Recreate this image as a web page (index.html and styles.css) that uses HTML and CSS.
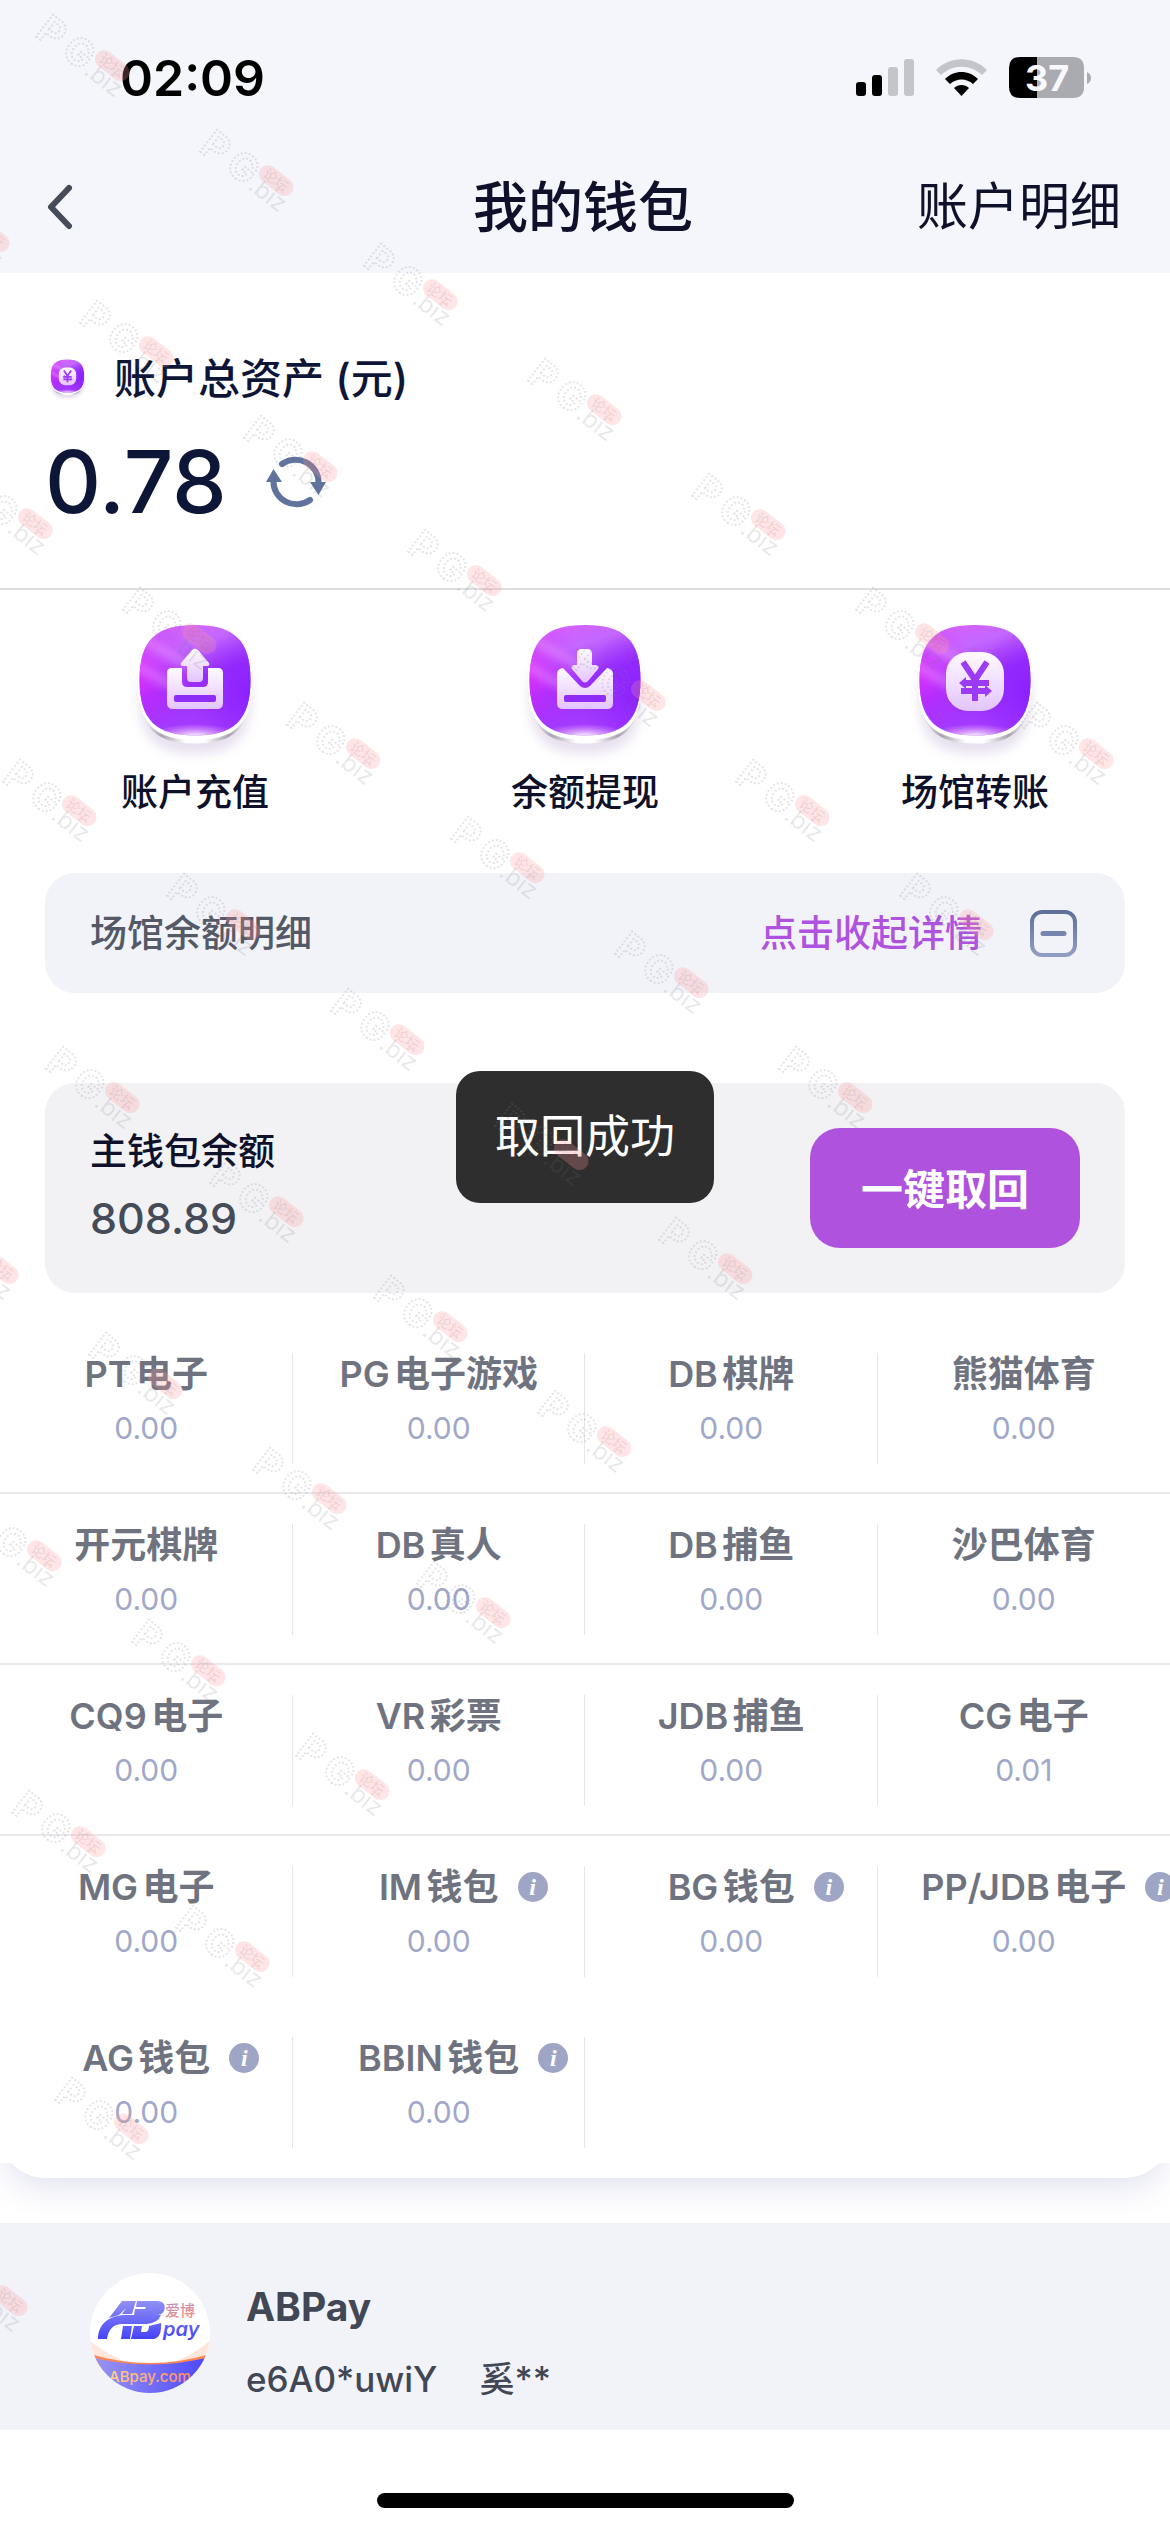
FILE: index.html
```html
<!DOCTYPE html>
<html lang="zh-CN">
<head>
<meta charset="utf-8">
<meta name="viewport" content="width=device-width, initial-scale=1">
<title>我的钱包</title>
<link rel="stylesheet" href="styles.css">
</head>
<body>
<svg class="defs" aria-hidden="true">
  <defs>
    <linearGradient id="tile" x1="0" y1="0" x2="0.35" y2="1">
      <stop offset="0" stop-color="#dc5cfb"/><stop offset="0.3" stop-color="#c468ff"/>
      <stop offset="0.6" stop-color="#9a30fb"/><stop offset="1" stop-color="#a63cff"/>
    </linearGradient>
    <radialGradient id="tile-left" cx="0" cy="0.5" r="0.5">
      <stop offset="0" stop-color="#e722fb" stop-opacity="0.9"/><stop offset="1" stop-color="#c030ff" stop-opacity="0"/>
    </radialGradient>
    <radialGradient id="tile-right" cx="0.95" cy="0.65" r="0.5">
      <stop offset="0" stop-color="#8a1fff"/><stop offset="1" stop-color="#8a1fff" stop-opacity="0"/>
    </radialGradient>
    <radialGradient id="tile-glow" cx="0.5" cy="0.5" r="0.5">
      <stop offset="0" stop-color="#fff" stop-opacity="0.95"/><stop offset="1" stop-color="#f0b8ff" stop-opacity="0"/>
    </radialGradient>
    <linearGradient id="rim" x1="0" y1="0" x2="1" y2="0">
      <stop offset="0" stop-color="#fff"/><stop offset="0.2" stop-color="#a9a3ad"/><stop offset="0.42" stop-color="#fff"/>
      <stop offset="0.58" stop-color="#fff"/><stop offset="0.8" stop-color="#a9a3ad"/><stop offset="1" stop-color="#fff"/>
    </linearGradient>
    <linearGradient id="glyph" x1="0" y1="0" x2="0" y2="1">
      <stop offset="0" stop-color="#fffaff"/><stop offset="1" stop-color="#e3c4ff"/>
    </linearGradient>
    <linearGradient id="slate" x1="0" y1="0" x2="0" y2="1">
      <stop offset="0" stop-color="#5f719b"/><stop offset="1" stop-color="#909cc3"/>
    </linearGradient>
    <linearGradient id="brand" gradientUnits="userSpaceOnUse" x1="0" y1="40" x2="0" y2="78">
      <stop offset="0" stop-color="#9191f3"/><stop offset="1" stop-color="#4743fa"/>
    </linearGradient>
    <linearGradient id="brand-band" x1="0" y1="0" x2="1" y2="0">
      <stop offset="0" stop-color="#9c98f3"/><stop offset="1" stop-color="#4b45fb"/>
    </linearGradient>
    <linearGradient id="brand-cn" x1="0" y1="0" x2="0.4" y2="1">
      <stop offset="0" stop-color="#a596e0"/><stop offset="1" stop-color="#f58d7c"/>
    </linearGradient>
    <linearGradient id="brand-url" x1="0" y1="0" x2="1" y2="0">
      <stop offset="0" stop-color="#ffd27f"/><stop offset="1" stop-color="#ff8a5c"/>
    </linearGradient>
    <filter id="soft" x="-30%" y="-30%" width="160%" height="160%"><feGaussianBlur stdDeviation="6"/></filter>
    <filter id="streak" x="-30%" y="-60%" width="160%" height="220%"><feGaussianBlur stdDeviation="4"/></filter>
    <path id="squircle" d="M65 15C103 15 120.500 29 120.500 70S103 125.500 65 125.500 9.500 111 9.500 70 27 15 65 15Z"/>
    <clipPath id="squircle-clip"><use href="#squircle"/></clipPath>
    <symbol id="tile-base" viewBox="0 0 130 160">
      <use href="#squircle" y="18" fill="#b9a3cf" opacity="0.35" filter="url(#soft)"/>
      <use href="#squircle" y="8" fill="url(#rim)"/>
      <use href="#squircle" y="3" fill="#fff" stroke="#fff" stroke-width="3"/>
      <use href="#squircle" fill="url(#tile)"/>
      <g clip-path="url(#squircle-clip)">
        <rect width="130" height="130" fill="url(#tile-left)"/>
        <rect width="130" height="130" fill="url(#tile-right)"/>
        <path d="M10 28L60 56M6 56L50 80" stroke="#f3b5ff" stroke-opacity="0.4" stroke-width="8" filter="url(#streak)"/>
        <ellipse cx="65" cy="126" rx="46" ry="12" fill="url(#tile-glow)"/>
      </g>
    </symbol>
    <symbol id="icon-transfer" viewBox="0 0 130 160">
      <use href="#tile-base"/>
      <rect x="36" y="42" width="58" height="59" rx="22" fill="url(#glyph)"/>
      <path d="M53 52L65 70L77 52M65 68V91M54 73H79M51 81H76" fill="none" stroke="#9b3bf5" stroke-width="6"/>
      <path d="M49 73L56 67V79ZM82 81L75 75V87Z" fill="#9b3bf5"/>
    </symbol>
    <symbol id="mark" viewBox="-10 -50 130 120" overflow="visible">
      <g transform="rotate(38)">
        <text class="mark-pg" x="0" y="0">P</text>
        <text class="mark-pg" x="32" y="-1">G</text>
        <text class="mark-biz" x="62" y="0">.biz</text>
        <rect x="61" y="-33" width="39" height="18" rx="9" fill="#ff9898" fill-opacity="0.25"/>
        <text class="mark-cn" x="66" y="-19">论坛</text>
      </g>
    </symbol>
  </defs>
</svg>

<div class="page">
  <header class="top">
    <div class="status">
      <time class="clock">02:09</time>
      <div class="status-icons">
        <svg width="58" height="38" viewBox="0 0 58 38" aria-label="信号">
          <rect y="23" width="10" height="14" rx="3"/><rect x="16" y="16" width="10" height="21" rx="3"/>
          <rect x="32" y="8" width="10" height="29" rx="3" fill="#c4c5ca"/><rect x="48" width="10" height="37" rx="3" fill="#c4c5ca"/>
        </svg>
        <svg width="51" height="38" viewBox="0 0 51 38" aria-label="无线网络">
          <path d="M0 11C14-3.500 37-3.500 51 11L46 16C34.500 5 16.500 5 5 16Z" fill="#c4c5ca"/>
          <path d="M9 20C18 10.500 33 10.500 42 20L37 25C30.500 19 20.500 19 14 25Z"/>
          <path d="M18 29C22 25 29 25 33 29L25.500 37Z"/>
        </svg>
        <svg width="84" height="42" viewBox="0 0 84 42" aria-label="电量">
          <path d="M11 0H28V41H11Q0 41 0 30V11Q0 0 11 0Z"/>
          <path d="M28 0H64Q75 0 75 11V30Q75 41 64 41H28Z" fill="#aaabb0"/>
          <path d="M78 15Q82 17 82 21T78 27Z" fill="#aaabb0"/>
          <text class="battery-text" x="38" y="34">37</text>
        </svg>
      </div>
    </div>
    <nav class="nav">
      <button class="back" type="button" aria-label="返回">
        <svg width="28" height="46" viewBox="0 0 28 46"><path d="M24 4L6 23L24 42" fill="none" stroke="#454b58" stroke-width="6" stroke-linecap="round" stroke-linejoin="round"/></svg>
      </button>
      <h1 class="title">我的钱包</h1>
      <a class="nav-link" href="#details">账户明细</a>
    </nav>
  </header>

  <main>
    <section class="assets">
      <h2 class="assets-label"><svg width="39" height="48" aria-hidden="true"><use href="#icon-transfer"/></svg>账户总资产 (元)</h2>
      <div class="assets-row">
        <strong class="assets-value">0.78</strong>
        <button class="refresh" type="button" aria-label="刷新">
          <svg width="60" height="56" viewBox="0 0 60 56">
            <path d="M16 10A23 22.500 0 0 1 52.500 29M44 46A23 22.500 0 0 1 7.500 27" fill="none" stroke="#60739d" stroke-width="6" stroke-linecap="round"/>
            <path d="M44 28H60L52.500 41ZM0 28H16L7.500 15Z" fill="#60739d"/>
          </svg>
        </button>
      </div>
    </section>

    <section class="actions">
      <button class="action" type="button">
        <svg width="130" height="160" viewBox="0 0 130 160" aria-hidden="true">
          <use href="#tile-base"/>
          <path d="M42 58H52V72Q52 77 57 77H73Q78 77 78 72V58H88Q93 58 93 63V93Q93 99 87 99H43Q37 99 37 93V63Q37 58 42 58Z" fill="url(#glyph)"/>
          <path d="M62 40Q65 37 68 40L79 53Q80 56 77 56H73V68Q73 72 69 72H61Q57 72 57 68V56H53Q50 56 51 53Z" fill="url(#glyph)"/>
          <rect x="44" y="85" width="42" height="7" rx="2" fill="#8f2cf8"/>
        </svg>
        账户充值
      </button>
      <button class="action" type="button">
        <svg width="130" height="160" viewBox="0 0 130 160" aria-hidden="true">
          <use href="#tile-base"/>
          <path d="M43 58L60 76Q65 80 70 76L87 58Q93 59 93 64V93Q93 99 87 99H43Q37 99 37 93V64Q37 59 43 58Z" fill="url(#glyph)"/>
          <path d="M57 44Q57 39 62 39H67Q72 39 72 44V55H76Q80 56 78 59L68 71Q65 74 62 71L52 59Q50 56 54 55H57Z" fill="url(#glyph)"/>
          <rect x="44" y="85" width="42" height="7" rx="2" fill="#8f2cf8"/>
        </svg>
        余额提现
      </button>
      <button class="action" type="button">
        <svg width="130" height="160" aria-hidden="true"><use href="#icon-transfer"/></svg>
        场馆转账
      </button>
    </section>

    <button class="toggle" type="button" aria-expanded="true">
      <span>场馆余额明细</span>
      <span class="toggle-hint">点击收起详情
        <svg width="47" height="47" viewBox="0 0 47 47" aria-hidden="true"><rect x="2" y="2" width="43" height="43" rx="10" fill="none" stroke="url(#slate)" stroke-width="4"/><path d="M13 23.500H34" stroke="#7685ae" stroke-width="5" stroke-linecap="round"/></svg>
      </span>
    </button>

    <section class="main-wallet">
      <div>
        <h2 class="wallet-label">主钱包余额</h2>
        <p class="wallet-value">808.89</p>
      </div>
      <button class="collect" type="button">一键取回</button>
      <div class="toast" role="status">取回成功</div>
    </section>

    <ul class="venues">
      <li><h3>PT电子</h3><p>0.00</p></li>
      <li><h3>PG电子游戏</h3><p>0.00</p></li>
      <li><h3>DB棋牌</h3><p>0.00</p></li>
      <li><h3>熊猫体育</h3><p>0.00</p></li>
      <li><h3>开元棋牌</h3><p>0.00</p></li>
      <li><h3>DB真人</h3><p>0.00</p></li>
      <li><h3>DB捕鱼</h3><p>0.00</p></li>
      <li><h3>沙巴体育</h3><p>0.00</p></li>
      <li><h3>CQ9电子</h3><p>0.00</p></li>
      <li><h3>VR彩票</h3><p>0.00</p></li>
      <li><h3>JDB捕鱼</h3><p>0.00</p></li>
      <li><h3>CG电子</h3><p>0.01</p></li>
      <li><h3>MG电子</h3><p>0.00</p></li>
      <li><h3>IM钱包<button class="info" type="button" aria-label="说明">i</button></h3><p>0.00</p></li>
      <li><h3>BG钱包<button class="info" type="button" aria-label="说明">i</button></h3><p>0.00</p></li>
      <li><h3>PP/JDB电子<button class="info" type="button" aria-label="说明">i</button></h3><p>0.00</p></li>
      <li><h3>AG钱包<button class="info" type="button" aria-label="说明">i</button></h3><p>0.00</p></li>
      <li><h3>BBIN钱包<button class="info" type="button" aria-label="说明">i</button></h3><p>0.00</p></li>
    </ul>
    <div class="sheet-edge"><div class="sheet-curve"></div></div>

    <section class="pay">
      <svg width="120" height="120" viewBox="10 12 120 120" role="img" aria-label="ABPay">
        <clipPath id="avatar"><circle cx="70" cy="72" r="60"/></clipPath>
        <g clip-path="url(#avatar)">
          <rect x="10" y="12" width="120" height="120" fill="#fff"/>
          <path d="M10 80Q30 96 52 103L10 100ZM130 80Q110 96 88 103L130 100Z" fill="#ffe6da"/>
          <path d="M10 93Q70 111 130 93V110H10Z" fill="#ff8557"/>
          <path d="M10 96Q70 111 130 96V132H10Z" fill="url(#brand-band)"/>
          <path d="M42 40H56L52 53H42L46 47L39 54L29 57ZM57 40H78Q87 41 84 50Q82 54 76 54H54L55 48H65L66 46H56Z" fill="url(#brand)"/>
          <path d="M18 78C18 63 29 55 44 54L81 54Q78 62 67 63H41Q29 64 27 78ZM43 65H52L50 78H41ZM54 65H62L61 71H66Q69 70 69 65L81 62Q82 76 74 78H51Z" fill="url(#brand)"/>
          <text class="logo-cn" x="85" y="55" fill="url(#brand-cn)">爱博</text>
          <text class="logo-pay" x="83" y="75" fill="url(#brand)">pay</text>
          <text class="logo-url" x="70" y="121" text-anchor="middle" fill="url(#brand-url)">ABpay.com</text>
        </g>
      </svg>
      <div class="pay-text">
        <h2 class="pay-name">ABPay</h2>
        <p class="pay-account"><span>e6A0*uwiY</span><span>奚**</span></p>
      </div>
    </section>
  </main>
  <div class="home-bar"></div>

  <svg class="watermarks" aria-hidden="true">
    <g><use href="#mark" x="24" y="-15" width="130" height="120"/><use href="#mark" x="188" y="100" width="130" height="120"/><use href="#mark" x="352" y="214" width="130" height="120"/><use href="#mark" x="516" y="329" width="130" height="120"/><use href="#mark" x="680" y="444" width="130" height="120"/><use href="#mark" x="844" y="558" width="130" height="120"/><use href="#mark" x="1008" y="673" width="130" height="120"/></g>
    <g><use href="#mark" x="-96" y="156" width="130" height="120"/><use href="#mark" x="68" y="271" width="130" height="120"/><use href="#mark" x="232" y="386" width="130" height="120"/><use href="#mark" x="396" y="500" width="130" height="120"/><use href="#mark" x="560" y="615" width="130" height="120"/><use href="#mark" x="724" y="730" width="130" height="120"/><use href="#mark" x="888" y="844" width="130" height="120"/></g>
    <g><use href="#mark" x="-53" y="443" width="130" height="120"/><use href="#mark" x="111" y="558" width="130" height="120"/><use href="#mark" x="275" y="673" width="130" height="120"/><use href="#mark" x="439" y="787" width="130" height="120"/><use href="#mark" x="603" y="902" width="130" height="120"/><use href="#mark" x="767" y="1017" width="130" height="120"/></g>
    <g><use href="#mark" x="-9" y="730" width="130" height="120"/><use href="#mark" x="155" y="844" width="130" height="120"/><use href="#mark" x="319" y="959" width="130" height="120"/><use href="#mark" x="483" y="1074" width="130" height="120"/><use href="#mark" x="647" y="1188" width="130" height="120"/></g>
    <g><use href="#mark" x="34" y="1017" width="130" height="120"/><use href="#mark" x="198" y="1131" width="130" height="120"/><use href="#mark" x="362" y="1246" width="130" height="120"/><use href="#mark" x="526" y="1361" width="130" height="120"/></g>
    <g><use href="#mark" x="-87" y="1188" width="130" height="120"/><use href="#mark" x="77" y="1303" width="130" height="120"/><use href="#mark" x="241" y="1418" width="130" height="120"/><use href="#mark" x="405" y="1532" width="130" height="120"/></g>
    <g><use href="#mark" x="-44" y="1475" width="130" height="120"/><use href="#mark" x="120" y="1590" width="130" height="120"/><use href="#mark" x="284" y="1704" width="130" height="120"/></g>
    <g><use href="#mark" x="0" y="1761" width="130" height="120"/><use href="#mark" x="164" y="1876" width="130" height="120"/><use href="#mark" x="43" y="2048" width="130" height="120"/><use href="#mark" x="-78" y="2220" width="130" height="120"/></g>
  </svg>
</div>
</body>
</html>
```
FILE: styles.css
```css
* { box-sizing: border-box; }

body {
  margin: 0;
  background: #fff;
  color: #0e1129;
  font-family: Inter, "Noto Sans CJK SC", sans-serif;
  font-size: 36px;
  text-autospace: normal;
}

h1, h2, h3, p, ul { margin: 0; padding: 0; font-weight: 500; }
ul { list-style: none; }
svg { display: block; flex: none; }
button { font: inherit; color: inherit; border: 0; padding: 0; background: none; cursor: pointer; }
a { color: inherit; text-decoration: none; }

.defs { position: absolute; width: 0; height: 0; }
.page { position: relative; overflow: hidden; }

.top { background: #f4f6fb; }
.status {
  display: flex;
  align-items: center;
  justify-content: space-between;
  height: 141px;
  padding: 15px 77px 0 120px;
}
.clock { font-size: 50px; font-weight: 600; line-height: 60px; color: #000; }
.status-icons { display: flex; align-items: center; gap: 22px; }
.battery-text { font: 700 36px Inter, sans-serif; text-anchor: middle; fill: #f8f9fc; }

.nav {
  display: grid;
  grid-template-columns: 1fr auto 1fr;
  align-items: center;
  height: 132px;
  padding: 0 49px 0 45px;
}
.back { justify-self: start; }
.title { font-size: 55px; line-height: 72px; }
.nav-link { justify-self: end; font-size: 51px; line-height: 72px; }

.assets { padding: 76px 45px 57px; color: #0e1638; border-bottom: 2px solid #dedede; }
.assets-label {
  display: flex;
  align-items: center;
  gap: 27px;
  padding-left: 3px;
  font-size: 42px;
  line-height: 60px;
}
.assets-row { display: flex; align-items: center; gap: 39px; margin-top: 23px; }
.assets-value { font-size: 87px; font-weight: 500; line-height: 99px; }

.actions { display: grid; grid-template-columns: repeat(3, 1fr); padding: 20px 0 57px; }
.action {
  display: flex;
  flex-direction: column;
  align-items: center;
  font-size: 37px;
  font-weight: 500;
  line-height: 46px;
}

.toggle {
  display: flex;
  align-items: center;
  justify-content: space-between;
  width: calc(100% - 90px);
  height: 120px;
  margin: 0 45px;
  padding: 0 48px 0 45px;
  border-radius: 30px;
  background: #f2f3f9;
  color: #535966;
  font-size: 37px;
  font-weight: 500;
  line-height: 51px;
}
.toggle-hint { display: flex; align-items: center; gap: 48px; color: #af52de; }

.main-wallet {
  position: relative;
  display: flex;
  align-items: center;
  justify-content: space-between;
  margin: 90px 45px 0;
  padding: 42px 45px 48px;
  border-radius: 30px;
  background: #f2f2f5;
}
.main-wallet > .collect { margin: 3px 0 -3px; }
.wallet-label { font-size: 37px; line-height: 54px; }
.wallet-value { margin-top: 12px; font-size: 43px; line-height: 54px; color: #454b58; }
.collect {
  width: 270px;
  height: 120px;
  padding-bottom: 4px;
  border-radius: 30px;
  background: #af52de;
  color: #fff;
  font-size: 42px;
  font-weight: 700;
}
.toast {
  position: absolute;
  top: -12px;
  left: 50%;
  width: 258px;
  transform: translateX(-50%);
  border-radius: 24px;
  background: #2e2e2e;
  color: #fff;
  font-size: 45px;
  line-height: 132px;
  text-align: center;
}

.venues { display: grid; grid-template-columns: repeat(4, 1fr); padding-top: 30px; }
.venues li {
  position: relative;
  height: 171px;
  padding-top: 24px;
  border-bottom: 2px solid #e9e9ec;
  text-align: center;
  white-space: nowrap;
}
.venues li:nth-child(n + 13) { border-bottom-color: transparent; }
.venues li:not(:nth-child(4n))::after {
  content: "";
  position: absolute;
  top: 30px;
  right: 0;
  width: 1px;
  height: 111px;
  background: #e6e6ea;
}
.venues h3 {
  position: relative;
  display: inline-block;
  color: #6f7380;
  font-size: 36px;
  font-weight: 600;
  line-height: 54px;
}
.venues p { color: #9fa8c9; font-size: 30px; font-weight: 400; line-height: 54px; }
.info {
  position: absolute;
  top: 12px;
  left: calc(100% + 19px);
  width: 30px;
  height: 30px;
  border-radius: 50%;
  background: #9ea5c5;
  color: #fff;
  font: italic 700 24px/28px "Liberation Serif", serif;
}

.sheet-edge { height: 60px; margin-top: -15px; overflow: hidden; }
.sheet-curve {
  height: 60px;
  margin-top: -45px;
  border-radius: 0 0 45px 45px;
  background: #fff;
  box-shadow: 0 12px 33px -3px rgba(80, 80, 170, 0.17);
}

.pay {
  display: flex;
  align-items: center;
  gap: 36px;
  height: 207px;
  padding: 12px 90px 0;
  background: #f2f3f9;
  color: #414755;
}
.pay-text { padding-top: 20px; }
.pay-name { font-size: 39px; font-weight: 700; line-height: 54px; }
.pay-account { display: flex; gap: 42px; margin-top: 18px; font-size: 35px; line-height: 54px; }

.home-bar { width: 36%; max-width: 417px; height: 15px; margin: 63px auto 24px; border-radius: 8px; background: #000; }

.watermarks { position: absolute; inset: 0; width: 100%; height: 100%; pointer-events: none; }
.mark-pg { font: 700 38px Inter, sans-serif; fill: none; stroke: #80808c; stroke-width: 2px; stroke-dasharray: 2 2; stroke-opacity: 0.22; }
.mark-biz { font: 400 24px Inter, sans-serif; fill: #70707a; fill-opacity: 0.16; }
.mark-cn { font: 500 14px "Noto Sans CJK SC", sans-serif; fill: #806068; fill-opacity: 0.14; }

.logo-cn { font: 500 15px "Noto Sans CJK SC", sans-serif; }
.logo-pay { font: italic 600 20px Inter, sans-serif; }
.logo-url { font: 500 15px Inter, sans-serif; }
```
